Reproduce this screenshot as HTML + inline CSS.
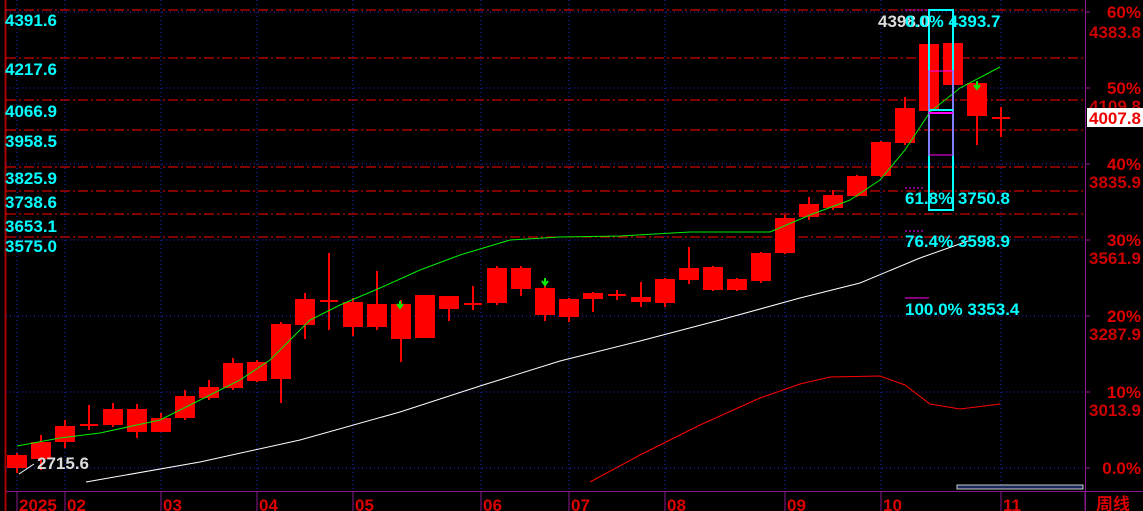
<!DOCTYPE html><html><head><meta charset="utf-8"><style>
html,body{margin:0;padding:0;background:#000;width:1143px;height:511px;overflow:hidden}
svg{display:block}
text{font-family:"Liberation Sans","Noto Sans CJK SC",sans-serif;font-weight:bold;font-size:17px}
</style></head><body>
<svg width="1143" height="511" viewBox="0 0 1143 511">
<rect width="1143" height="511" fill="#000"/>
<line x1="5.5" y1="0" x2="5.5" y2="511" stroke="#a00" stroke-width="2"/>
<g stroke="#1a2ad8" stroke-width="1" stroke-dasharray="1,3">
<line x1="6" y1="12" x2="1085" y2="12"/><line x1="6" y1="88" x2="1085" y2="88"/><line x1="6" y1="164" x2="1085" y2="164"/><line x1="6" y1="240" x2="1085" y2="240"/><line x1="6" y1="316" x2="1085" y2="316"/><line x1="6" y1="392" x2="1085" y2="392"/><line x1="6" y1="468" x2="1085" y2="468"/>
<line x1="17" y1="0" x2="17" y2="511"/><line x1="65" y1="0" x2="65" y2="511"/><line x1="161" y1="0" x2="161" y2="511"/><line x1="257" y1="0" x2="257" y2="511"/><line x1="353" y1="0" x2="353" y2="511"/><line x1="481" y1="0" x2="481" y2="511"/><line x1="569" y1="0" x2="569" y2="511"/><line x1="665" y1="0" x2="665" y2="511"/><line x1="785" y1="0" x2="785" y2="511"/><line x1="881" y1="0" x2="881" y2="511"/><line x1="1001" y1="0" x2="1001" y2="511"/>
</g>
<g stroke="#f00" stroke-width="1" stroke-dasharray="10,3,2,3">
<line x1="6" y1="10" x2="1085" y2="10"/><line x1="6" y1="58" x2="1085" y2="58"/><line x1="6" y1="100" x2="1085" y2="100"/><line x1="6" y1="130" x2="1085" y2="130"/><line x1="6" y1="167" x2="1085" y2="167"/><line x1="6" y1="191" x2="1085" y2="191"/><line x1="6" y1="214" x2="1085" y2="214"/><line x1="6" y1="237" x2="1085" y2="237"/>
</g>
<line x1="1085.5" y1="0" x2="1085.5" y2="511" stroke="#8a1a8a"/>
<line x1="6" y1="491.5" x2="1143" y2="491.5" stroke="#8a1a8a"/>
<g stroke="#8a1a8a"><line x1="1085" y1="12" x2="1090" y2="12"/><line x1="1085" y1="88" x2="1090" y2="88"/><line x1="1085" y1="164" x2="1090" y2="164"/><line x1="1085" y1="240" x2="1090" y2="240"/><line x1="1085" y1="316" x2="1090" y2="316"/><line x1="1085" y1="392" x2="1090" y2="392"/><line x1="1085" y1="468" x2="1090" y2="468"/>
<line x1="17" y1="491" x2="17" y2="511"/><line x1="65" y1="491" x2="65" y2="511"/><line x1="161" y1="491" x2="161" y2="511"/><line x1="257" y1="491" x2="257" y2="511"/><line x1="353" y1="491" x2="353" y2="511"/><line x1="481" y1="491" x2="481" y2="511"/><line x1="569" y1="491" x2="569" y2="511"/><line x1="665" y1="491" x2="665" y2="511"/><line x1="785" y1="491" x2="785" y2="511"/><line x1="881" y1="491" x2="881" y2="511"/><line x1="1001" y1="491" x2="1001" y2="511"/><line x1="1085" y1="491" x2="1085" y2="511"/></g>
<g fill="#f00" stroke="#f00" stroke-width="2">
<line x1="17" y1="453" x2="17" y2="473"/><rect x="8" y="456" width="18" height="11"/>
<line x1="41" y1="435" x2="41" y2="470"/><rect x="32" y="443" width="18" height="15"/>
<line x1="65" y1="420" x2="65" y2="448"/><rect x="56" y="427" width="18" height="14"/>
<line x1="89" y1="405" x2="89" y2="430"/><line x1="80" y1="425" x2="98" y2="425"/>
<line x1="113" y1="403" x2="113" y2="427"/><rect x="104" y="410" width="18" height="14"/>
<line x1="137" y1="404" x2="137" y2="438"/><rect x="128" y="410" width="18" height="21"/>
<line x1="161" y1="413" x2="161" y2="432"/><rect x="152" y="419" width="18" height="12"/>
<line x1="185" y1="390" x2="185" y2="420"/><rect x="176" y="397" width="18" height="20"/>
<line x1="209" y1="380" x2="209" y2="400"/><rect x="200" y="388" width="18" height="9"/>
<line x1="233" y1="358" x2="233" y2="390"/><rect x="224" y="364" width="18" height="23"/>
<line x1="257" y1="360" x2="257" y2="382"/><rect x="248" y="363" width="18" height="17"/>
<line x1="281" y1="322" x2="281" y2="403"/><rect x="272" y="325" width="18" height="53"/>
<line x1="305" y1="293" x2="305" y2="339"/><rect x="296" y="300" width="18" height="24"/>
<line x1="329" y1="253" x2="329" y2="330"/><line x1="320" y1="301" x2="338" y2="301"/>
<line x1="353" y1="298" x2="353" y2="336"/><rect x="344" y="303" width="18" height="23"/>
<line x1="377" y1="271" x2="377" y2="330"/><rect x="368" y="305" width="18" height="21"/>
<line x1="401" y1="300" x2="401" y2="362"/><rect x="392" y="305" width="18" height="33"/>
<line x1="425" y1="295" x2="425" y2="338"/><rect x="416" y="296" width="18" height="41"/>
<line x1="449" y1="297" x2="449" y2="321"/><rect x="440" y="297" width="18" height="11"/>
<line x1="473" y1="286" x2="473" y2="310"/><line x1="464" y1="304" x2="482" y2="304"/>
<line x1="497" y1="266" x2="497" y2="305"/><rect x="488" y="269" width="18" height="33"/>
<line x1="521" y1="266" x2="521" y2="296"/><rect x="512" y="269" width="18" height="19"/>
<line x1="545" y1="282" x2="545" y2="321"/><rect x="536" y="289" width="18" height="25"/>
<line x1="569" y1="298" x2="569" y2="322"/><rect x="560" y="300" width="18" height="16"/>
<line x1="593" y1="292" x2="593" y2="312"/><rect x="584" y="294" width="18" height="4"/>
<line x1="617" y1="290" x2="617" y2="300"/><line x1="608" y1="295" x2="626" y2="295"/>
<line x1="641" y1="282" x2="641" y2="307"/><rect x="632" y="298" width="18" height="3"/>
<line x1="665" y1="278" x2="665" y2="307"/><rect x="656" y="280" width="18" height="22"/>
<line x1="689" y1="247" x2="689" y2="284"/><rect x="680" y="269" width="18" height="10"/>
<line x1="713" y1="266" x2="713" y2="291"/><rect x="704" y="268" width="18" height="21"/>
<line x1="737" y1="278" x2="737" y2="291"/><rect x="728" y="280" width="18" height="9"/>
<line x1="761" y1="252" x2="761" y2="283"/><rect x="752" y="254" width="18" height="26"/>
<line x1="785" y1="215" x2="785" y2="254"/><rect x="776" y="219" width="18" height="33"/>
<line x1="809" y1="197" x2="809" y2="220"/><rect x="800" y="205" width="18" height="11"/>
<line x1="833" y1="190" x2="833" y2="210"/><rect x="824" y="196" width="18" height="11"/>
<line x1="857" y1="175" x2="857" y2="197"/><rect x="848" y="177" width="18" height="18"/>
<line x1="881" y1="141" x2="881" y2="177"/><rect x="872" y="143" width="18" height="32"/>
<line x1="905" y1="97" x2="905" y2="145"/><rect x="896" y="109" width="18" height="33"/>
<rect x="920" y="45" width="18" height="65"/>
<rect x="944" y="44" width="18" height="40"/>
<line x1="977" y1="84" x2="977" y2="145"/><rect x="968" y="84" width="18" height="31"/>
<line x1="1001" y1="107" x2="1001" y2="137"/><line x1="992" y1="118" x2="1010" y2="118"/>
</g>
<polyline fill="none" stroke="#0e0" stroke-width="1" points="17,446 60,438 100,433 160,420 200,400 240,380 270,360 290,340 310,320 340,305 380,288 420,270 460,255 510,240 560,237 620,236 690,232 770,232 810,215 850,200 880,180 905,150 930,112 960,88 1000,67"/>
<polyline fill="none" stroke="#fff" stroke-width="1" points="86,482 200,462 300,440 400,412 480,386 560,361 640,341 720,320 800,298 860,283 920,258 968,241"/>
<polyline fill="none" stroke="#f00" stroke-width="1" points="590,482 640,455 700,425 760,398 800,384 830,377 880,376 905,385 930,404 960,409 1000,404"/>
<line x1="19" y1="474" x2="34" y2="464" stroke="#fff"/>
<rect x="929" y="10" width="24" height="200" fill="none" stroke="#0ff" stroke-width="2"/>
<rect x="929" y="71" width="24" height="84" fill="none" stroke="#f0f" stroke-width="1"/>
<line x1="929" y1="110" x2="953" y2="110" stroke="#0ff" stroke-width="2"/>
<line x1="929" y1="113" x2="953" y2="113" stroke="#f0f" stroke-width="2"/>
<line x1="905" y1="10" x2="929" y2="10" stroke="#f0f" stroke-dasharray="2,2"/>
<line x1="905" y1="188" x2="925" y2="188" stroke="#f0f" stroke-dasharray="2,2"/>
<line x1="905" y1="231" x2="925" y2="231" stroke="#f0f" stroke-dasharray="2,2"/>
<line x1="905" y1="298" x2="929" y2="298" stroke="#f0f"/>
<path d="M400 301v6M397 304l3 4 3-4M545 278v6M542 281l3 4 3-4M977 81v7M974 85l3 4 3-4" stroke="#0e0" stroke-width="2" fill="none"/>
<rect x="957" y="485" width="126" height="4" fill="#1a2a5a" stroke="#ccc"/>
<g fill="#0ff">
<text x="5" y="26">4391.6</text><text x="5" y="75">4217.6</text><text x="5" y="117">4066.9</text><text x="5" y="147">3958.5</text><text x="5" y="184">3825.9</text><text x="5" y="208">3738.6</text><text x="5" y="232">3653.1</text><text x="5" y="252">3575.0</text>
<text x="905" y="204">61.8% 3750.8</text><text x="905" y="247">76.4% 3598.9</text><text x="905" y="315">100.0% 3353.4</text>
</g>
<text x="878" y="27" fill="#ddd">4398.0</text>
<text x="905" y="27" fill="#0ff">0.0% 4393.7</text>
<text x="37" y="469" fill="#ddd">2715.6</text>
<g fill="#d00" text-anchor="end">
<text x="1141" y="18">60%</text><text x="1141" y="38" fill="#c00">4383.8</text>
<text x="1141" y="94">50%</text><text x="1141" y="112" fill="#c00">4109.8</text>
<text x="1141" y="170">40%</text><text x="1141" y="188" fill="#c00">3835.9</text>
<text x="1141" y="246">30%</text><text x="1141" y="264" fill="#c00">3561.9</text>
<text x="1141" y="322">20%</text><text x="1141" y="340" fill="#c00">3287.9</text>
<text x="1141" y="398">10%</text><text x="1141" y="416" fill="#c00">3013.9</text>
<text x="1141" y="474">0.0%</text>
</g>
<rect x="1087" y="108" width="56" height="19" fill="#fff"/>
<path d="M1087 117l5-5v10z" fill="#fff"/>
<text x="1141" y="124" fill="#e00" text-anchor="end">4007.8</text>
<g fill="#d00">
<text x="19" y="511">2025</text><text x="67" y="511">02</text><text x="163" y="511">03</text><text x="259" y="511">04</text><text x="355" y="511">05</text><text x="483" y="511">06</text><text x="571" y="511">07</text><text x="667" y="511">08</text><text x="787" y="511">09</text><text x="883" y="511">10</text><text x="1003" y="511">11</text><text x="1096" y="510" font-weight="normal">周线</text>
</g>
</svg></body></html>
